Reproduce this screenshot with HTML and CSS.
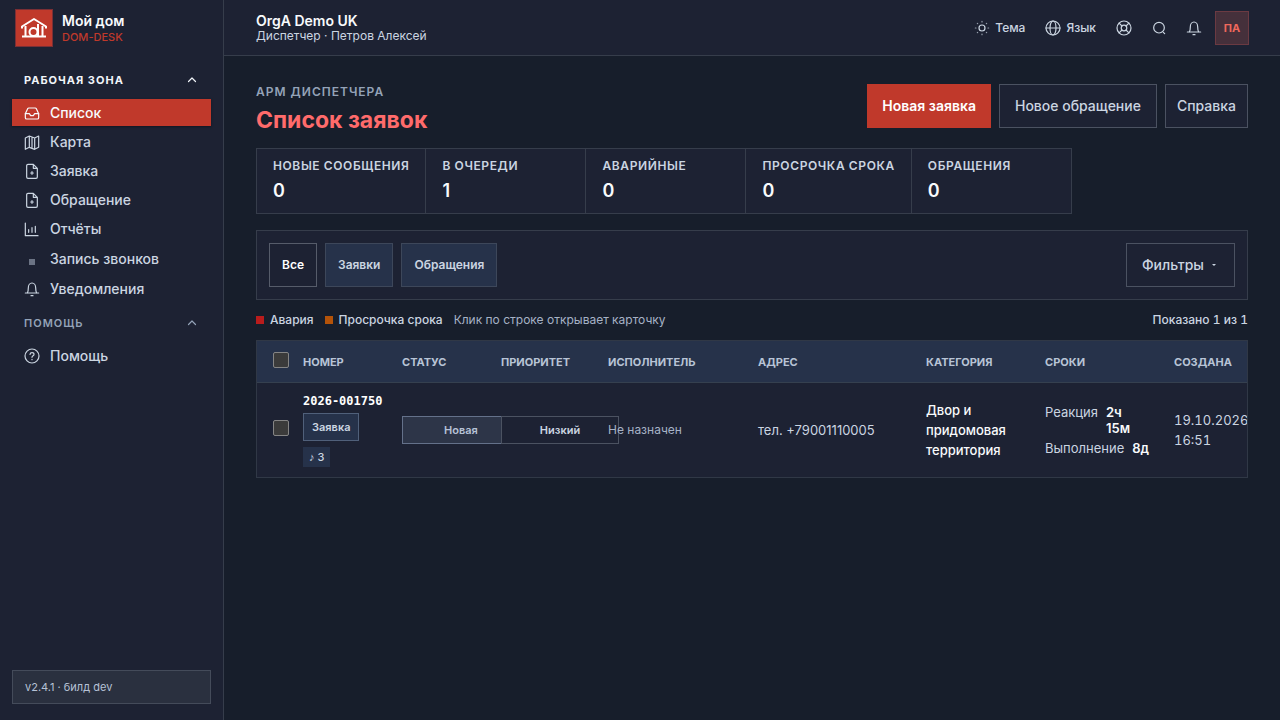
FILE: index.html
```html
<!DOCTYPE html>
<html lang="ru">
<head>
<meta charset="utf-8">
<meta name="viewport" content="width=device-width, initial-scale=1">
<title>Список заявок</title>
<link rel="stylesheet" href="styles.css">
</head>
<body>
<div class="app">
  <aside class="sidebar">
    <a class="brand" href="#">
      <span class="brand-mark">
        <svg viewBox="0 0 36 36" width="36" height="36" fill="none" stroke="#fff" stroke-width="2" stroke-linejoin="round"><path d="M6 18.500v-2L18 9l12 7.500v2"/><path d="M9.500 16v10M26.500 16v10"/><path d="M6 26.500h24"/><circle cx="17.500" cy="22" r="4"/><path d="M22 14v12"/></svg>
      </span>
      <span class="brand-text"><span class="brand-name">Мой дом</span><span class="brand-sub">DOM-DESK</span></span>
    </a>
    <nav class="nav">
      <button class="nav-head nav-head-open" type="button">Рабочая зона
        <svg class="icon chevron" viewBox="0 0 12 12" width="12" height="12"><path d="m2.500 7.500 3.500-3.500 3.500 3.500"/></svg></button>
      <a class="nav-item active" href="#"><svg class="icon" viewBox="0 0 24 24" width="16" height="16"><path d="M22 13h-6l-2 3h-4l-2-3H2"/><path d="M5.500 5.500 2 13v6a2 2 0 0 0 2 2h16a2 2 0 0 0 2-2v-6l-3.500-7.500A2 2 0 0 0 16.700 4.500H7.300a2 2 0 0 0-1.800 1z"/></svg>Список</a>
      <a class="nav-item" href="#"><svg class="icon" viewBox="0 0 24 24" width="16" height="16"><path d="M2 6v17l6-3 8 3 6-3V3l-6 3-8-3zM8 3v17M16 6v17M12 5v16"/></svg>Карта</a>
      <a class="nav-item" href="#"><svg class="icon" viewBox="0 0 24 24" width="16" height="16"><path d="M14 2H6a2 2 0 0 0-2 2v17a2 2 0 0 0 2 2h12a2 2 0 0 0 2-2V8zM14 2v6h6M12 13v4M10 15h4"/></svg>Заявка</a>
      <a class="nav-item" href="#"><svg class="icon" viewBox="0 0 24 24" width="16" height="16"><path d="M14 2H6a2 2 0 0 0-2 2v17a2 2 0 0 0 2 2h12a2 2 0 0 0 2-2V8zM14 2v6h6M12 13v4M10 15h4"/></svg>Обращение</a>
      <a class="nav-item" href="#"><svg class="icon" viewBox="0 0 24 24" width="16" height="16"><path d="M2 3v19h19M7 13v4M12 10v7M17 8v9"/></svg>Отчёты</a>
      <a class="nav-item nav-item-plain" href="#"><svg viewBox="0 0 16 16" width="16" height="16"><path fill="#6b7384" d="M5 8h6v6H5z"/></svg>Запись звонков</a>
      <a class="nav-item" href="#"><svg class="icon" viewBox="0 0 24 24" width="16" height="16"><path d="M2 18h20M5 18c1-2 1.500-4 1.500-8a5.500 7 0 0 1 11 0c0 4 .5 6 1.500 8M10.500 22h3"/></svg>Уведомления</a>
      <button class="nav-head" type="button">Помощь
        <svg class="icon chevron" viewBox="0 0 12 12" width="12" height="12"><path d="m2.500 7.500 3.500-3.500 3.500 3.500"/></svg></button>
      <a class="nav-item" href="#"><svg class="icon" viewBox="0 0 24 24" width="16" height="16"><circle cx="12" cy="12" r="10.500"/><path d="M9 9.500c.3-1.700 1.500-2.500 3-2.500s3 1 3 2.600c0 2-3 2.200-3 4.400M12 17v.5"/></svg>Помощь</a>
    </nav>
    <div class="build">v2.4.1 · билд dev</div>
  </aside>

  <div class="page">
    <header class="topbar">
      <div class="org"><strong class="org-name">OrgA Demo UK</strong><span class="org-user">Диспетчер · Петров Алексей</span></div>
      <div class="tools">
        <button class="tool" type="button"><svg class="icon" viewBox="0 0 24 24" width="16" height="16"><circle cx="12" cy="12" r="4.500"/><path stroke-opacity=".7" d="M12 2v1M12 21v1M2 12h1M21 12h1M5 5l.5.5M18.500 18.500l.5.5M5 19l.5-.5M18.500 5.500l.5-.5"/></svg>Тема</button>
        <button class="tool" type="button"><svg class="icon" viewBox="0 0 24 24" width="16" height="16"><circle cx="12" cy="12" r="10.500"/><ellipse cx="12" cy="12" rx="4.500" ry="10.500"/><path d="M1.500 12h21"/></svg>Язык</button>
        <button class="tool tool-icon" type="button" aria-label="Поддержка"><svg class="icon" viewBox="0 0 24 24" width="16" height="16"><circle cx="12" cy="12" r="10.500"/><circle cx="12" cy="12" r="4.200"/><path d="m4.600 4.600 4.400 4.400M15 15l4.400 4.400M19.400 4.600 15 9M9 15l-4.400 4.400"/></svg></button>
        <button class="tool tool-icon" type="button" aria-label="Поиск"><svg class="icon" viewBox="0 0 24 24" width="16" height="16"><circle cx="12" cy="11.500" r="8"/><path d="m18.500 18.500 2 2"/></svg></button>
        <button class="tool tool-icon" type="button" aria-label="Уведомления"><svg class="icon" viewBox="0 0 24 24" width="16" height="16"><path d="M2 18h20M5 18c1-2 1.500-4 1.500-8a5.500 7 0 0 1 11 0c0 4 .5 6 1.500 8M10.500 22h3"/></svg></button>
        <button class="avatar" type="button">ПА</button>
      </div>
    </header>

    <main class="main">
      <div class="heading">
        <div><div class="eyebrow">АРМ диспетчера</div><h1 class="title">Список заявок</h1></div>
        <div class="actions">
          <button class="btn btn-primary" type="button">Новая заявка</button>
          <button class="btn" type="button">Новое обращение</button>
          <button class="btn btn-narrow" type="button">Справка</button>
        </div>
      </div>

      <dl class="stats">
        <div class="stat"><dt>Новые сообщения</dt><dd>0</dd></div>
        <div class="stat"><dt>В очереди</dt><dd>1</dd></div>
        <div class="stat"><dt>Аварийные</dt><dd>0</dd></div>
        <div class="stat"><dt>Просрочка срока</dt><dd>0</dd></div>
        <div class="stat"><dt>Обращения</dt><dd>0</dd></div>
      </dl>

      <section class="filters">
        <button class="chip chip-on" type="button">Все</button>
        <button class="chip" type="button">Заявки</button>
        <button class="chip" type="button">Обращения</button>
        <button class="btn filter-btn" type="button">Фильтры <span class="caret"></span></button>
      </section>

      <div class="legend">
        <span class="key"><i class="dot dot-red"></i>Авария</span>
        <span class="key"><i class="dot dot-orange"></i>Просрочка срока</span>
        <span class="hint">Клик по строке открывает карточку</span>
        <span class="count">Показано 1 из 1</span>
      </div>

      <div class="table-wrap">
        <table class="table">
          <colgroup><col class="c-check"><col class="c-num"><col class="c-status"><col class="c-prio"><col class="c-exec"><col><col class="c-cat"><col class="c-terms"><col class="c-created"></colgroup>
          <thead><tr>
            <th><input class="check" type="checkbox" aria-label="Выбрать все"></th>
            <th>Номер</th><th>Статус</th><th>Приоритет</th><th>Исполнитель</th><th>Адрес</th><th>Категория</th><th>Сроки</th><th>Создана</th>
          </tr></thead>
          <tbody><tr>
            <td><input class="check" type="checkbox" aria-label="Выбрать заявку 2026-001750"></td>
            <td><div class="number"><a class="num" href="#">2026-001750</a><span class="tag">Заявка</span><span class="audio">♪ 3</span></div></td>
            <td><span class="pill pill-new">Новая</span></td>
            <td><span class="pill">Низкий</span></td>
            <td class="muted">Не назначен</td>
            <td class="address">тел. +79001110005</td>
            <td class="category">Двор и придомовая территория</td>
            <td><div class="terms"><div class="term"><span>Реакция</span><b>2ч 15м</b></div><div class="term"><span>Выполнение</span><b>8д</b></div></div></td>
            <td class="created">19.10.2026 16:51</td>
          </tr></tbody>
        </table>
      </div>
    </main>
  </div>
</div>
</body>
</html>
```
FILE: styles.css
```css
* { box-sizing: border-box; }
body {
  margin: 0;
  background: #171e2b;
  color: #cbd5e1;
  font: 500 14px/20px Inter, "Noto Sans", sans-serif;
}
button { font: inherit; color: inherit; background: none; border: 0; padding: 0; cursor: pointer; }
a { color: inherit; text-decoration: none; }
svg { flex: none; }
.icon { fill: none; stroke: currentColor; stroke-width: 1.8; stroke-linecap: round; stroke-linejoin: round; }
.chevron { stroke-width: 1.2; }

.app { display: flex; min-height: 100vh; }

.sidebar {
  display: flex;
  flex-direction: column;
  flex: none;
  width: 224px;
  padding: 9px 12px 16px;
  background: #1d2233;
  border-right: 1px solid #363d4b;
}
.brand { display: flex; align-items: center; gap: 9px; padding-left: 3px; }
.brand-mark { display: flex; border: 1px solid #7b2f35; background: #c0392b; }
.brand-text { display: flex; flex-direction: column; }
.brand-name { color: #f8fafc; font-size: 14px; line-height: 17px; font-weight: 600; }
.brand-sub { color: #c0392b; font-size: 11px; line-height: 16px; font-weight: 500; }

.nav { display: flex; flex-direction: column; gap: 2px; flex: 1; padding-top: 18px; }
.nav-head {
  display: flex;
  align-items: center;
  justify-content: space-between;
  height: 36px;
  padding: 2px 13px 0 12px;
  color: #94a3b8;
  font-size: 11px;
  font-weight: 600;
  letter-spacing: 1px;
  text-transform: uppercase;
}
.nav-head-open { height: 32px; padding: 0 13px 2px 12px; color: #f1f5f9; font-weight: 700; }
.nav-item {
  display: flex;
  align-items: center;
  gap: 10px;
  min-height: 27px;
  padding: 0 12px;
}
.nav-item-plain { min-height: 29px; }
.nav-item.active { background: #c0392b; color: #f8fafc; box-shadow: 0 1px 2px #111622; }
.build {
  padding: 6px 12px;
  border: 1px solid #444b5a;
  background: #2a303f;
  color: #b6c2d6;
  font-size: 11px;
  font-weight: 400;
}

.page { flex: 1; min-width: 0; }
.topbar {
  display: flex;
  align-items: center;
  justify-content: space-between;
  height: 56px;
  padding: 0 31px 0 32px;
  background: #1d2233;
  border-bottom: 1px solid #363d4b;
}
.org { display: flex; flex-direction: column; }
.org-name { color: #f8fafc; font-size: 14px; line-height: 15px; font-weight: 600; }
.org-user { font-size: 12px; line-height: 15px; font-weight: 400; }
.tools { display: flex; align-items: center; gap: 20px; }
.tool { display: flex; align-items: center; gap: 5px; font-size: 12px; }
.tool-icon { margin-right: -1px; }
.avatar {
  width: 34px;
  height: 34px;
  margin-left: -6px;
  border: 1px solid #6b3a42;
  background: #45303b;
  color: #f0685c;
  font-size: 11px;
  font-weight: 700;
}

.main { padding: 28px 32px; }
.heading { display: flex; justify-content: space-between; align-items: flex-start; }
.eyebrow { color: #94a3b8; font-size: 12px; line-height: 16px; font-weight: 600; letter-spacing: 1px; text-transform: uppercase; }
.title { margin: 4px 0 0; color: #ff6b6b; font-size: 23px; line-height: 32px; font-weight: 700; }
.actions { display: flex; gap: 8px; }
.btn { height: 44px; padding: 0 15px; border: 1px solid #4b5261; background: #1d2233; white-space: nowrap; }
.btn-primary { padding: 0 14px; border-color: #c0392b; background: #c0392b; color: #fff; font-weight: 600; }
.btn-narrow { padding: 0 11px; }

.stats { display: inline-flex; margin: 12px 0 16px; border: 1px solid #363d4b; background: #1d2233; vertical-align: top; }
.stat { min-width: 160px; padding: 8px 16px 10px; }
.stat + .stat { border-left: 1px solid #363d4b; }
.stat dt { font-size: 12px; line-height: 18px; font-weight: 600; letter-spacing: .05em; text-transform: uppercase; white-space: nowrap; }
.stat dd { margin: 4px 0 0; color: #f8fafc; font-size: 18px; line-height: 24px; font-weight: 600; }

.filters { display: flex; gap: 8px; padding: 12px; border: 1px solid #363d4b; background: #1d2233; }
.chip { height: 44px; padding: 0 12px; border: 1px solid #3d475a; background: #26324a; font-size: 12px; font-weight: 600; }
.chip-on { border-color: #565c6a; background: #1d2233; color: #fff; }
.filter-btn { display: flex; align-items: center; gap: 8px; margin-left: auto; }
.caret { border: 2px solid transparent; border-top-color: currentColor; border-bottom: 0; margin-right: 3px; }

.legend { display: flex; align-items: center; gap: 11px; padding: 10px 0; font-size: 12px; }
.key { display: flex; align-items: center; gap: 6px; }
.dot { width: 8px; height: 8px; }
.dot-red { background: #b91c1c; }
.dot-orange { background: #b45309; }
.hint { color: #a6b2c6; font-weight: 400; }
.count { margin-left: auto; font-variant-numeric: tabular-nums; }

.table-wrap { overflow: hidden; border: 1px solid #303846; background: #1d2233; }
.table { width: 100%; min-width: 990px; table-layout: fixed; border-collapse: separate; border-spacing: 0; }
.c-check { width: 38px; }
.c-num, .c-status { width: 99px; }
.c-prio { width: 107px; }
.c-exec { width: 150px; }
.c-cat { width: 119px; }
.c-terms { width: 129px; }
.c-created { width: 81px; }
.table th {
  height: 42px;
  padding: 0 8px;
  background: #26324a;
  border-bottom: 1px solid #35404f;
  color: #b8c4d6;
  font-size: 11px;
  font-weight: 700;
  text-align: left;
  text-transform: uppercase;
  white-space: nowrap;
}
.table td { height: 94px; padding: 0 8px; vertical-align: middle; }
.table th:first-child, .table td:first-child { padding: 0 0 0 16px; }
.check {
  display: block;
  appearance: none;
  width: 16px;
  height: 16px;
  margin: 0 0 4px;
  border: 1px solid #858585;
  border-radius: 2px;
  background: #3b3b3b;
}
.number { display: flex; flex-direction: column; align-items: flex-start; white-space: nowrap; }
.num { color: #fff; font: 700 12px/16px "Liberation Mono", "DejaVu Sans Mono", monospace; font-family: "DejaVu Sans Mono", monospace; margin-bottom: 4px; }
.tag { padding: 4px 8px; border: 1px solid #50607a; background: #26324a; font-size: 11px; line-height: 18px; font-weight: 600; }
.audio { margin-top: 6px; padding: 0 6px; background: #26324a; font-size: 11px; }
.pill {
  display: flex;
  justify-content: center;
  align-items: center;
  width: 118px;
  height: 28px;
  border: 1px solid #4b5261;
  background: #1d2233;
  font-size: 11px;
  font-weight: 600;
}
.pill-new { border-color: #64718a; background: #2d3548; color: #b6c2d6; }
.muted { color: #a6b2c6; font-size: 12px; font-weight: 400; }
.address { font-size: 13px; font-weight: 400; }
.category { color: #f8fafc; font-size: 13px; }
.terms { display: flex; flex-direction: column; gap: 4px; max-width: 100px; font-size: 13px; line-height: 16px; font-weight: 400; }
.term { display: flex; gap: 8px; }
.term b { color: #f8fafc; font-weight: 600; }
.created { font-size: 13px; font-weight: 400; font-variant-numeric: tabular-nums; }
```
